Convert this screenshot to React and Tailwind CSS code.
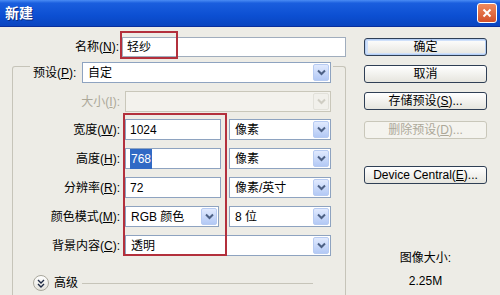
import React from "react";

const F = "font-['Liberation_Sans','Noto_Sans_CJK_SC',sans-serif]";

function Arrow({ disabled }) {
  return (
    <span
      className={`flex h-[17px] w-[16px] items-center justify-center rounded-[2px] border ${
        disabled
          ? "border-[#e2e1da] bg-[#f1f0eb]"
          : "border-[#b7cbf2] bg-gradient-to-b from-[#e1eafe] to-[#b3c9f5]"
      }`}
    >
      <svg width="9" height="7" viewBox="0 0 9 7">
        <path
          d="M1 1.5 L4.5 5 L8 1.5"
          fill="none"
          stroke={disabled ? "#cfcdc3" : "#4d6185"}
          strokeWidth="2"
        />
      </svg>
    </span>
  );
}

function Select({ w, text, disabled }) {
  return (
    <div
      className={`flex h-[21px] ${w} items-center justify-between border ${
        disabled ? "border-[#c9c7ba] bg-[#f3f2ed]" : "border-[#8ea3c0] bg-white"
      } pl-[5px] pr-[1px]`}
    >
      <span className="leading-none">{text}</span>
      <Arrow disabled={disabled} />
    </div>
  );
}

function Label({ t, k, gray }) {
  return (
    <span className={`whitespace-nowrap ${gray ? "text-[#aca899]" : "text-black"}`}>
      {t}(<u>{k}</u>):
    </span>
  );
}

function Row({ t, k, gray, children, mt }) {
  return (
    <div className={`flex h-[21px] items-center ${mt}`}>
      <div className="w-[107px] text-right">
        <Label t={t} k={k} gray={gray} />
      </div>
      <div className="ml-[5px] flex items-center gap-[8px]">{children}</div>
    </div>
  );
}

function Input({ w, children }) {
  return (
    <div className={`flex h-[21px] ${w} items-center border border-[#8ea3c0] bg-white pl-[4px]`}>
      {children}
    </div>
  );
}

function Btn({ children, mt, def, disabled }) {
  return (
    <div
      className={`flex h-[18px] w-[123px] items-center justify-center rounded-[3px] border ${mt} ${
        disabled
          ? "border-[#c9c7ba] bg-[#f4f3ee] text-[#aca899]"
          : "border-[#2f3f55] bg-gradient-to-b from-white to-[#e6e5de] text-black"
      } ${def ? "shadow-[inset_0_0_0_1px_#b5cff5,inset_1px_0_0_2px_#cfe0fa]" : ""}`}
    >
      {children}
    </div>
  );
}

export default function App() {
  return (
    <div
      className={`flex h-[295px] w-[500px] flex-col overflow-hidden bg-[#edece6] text-[12px] text-black ${F}`}
    >
      {/* Title bar */}
      <div className="flex h-[27px] items-center justify-between border-b border-[#0a2f9c] bg-[linear-gradient(to_bottom,#4a8cf4_0%,#1a5ede_12%,#0c4fd2_60%,#0a45c0_100%)] pl-[5px] pr-[3px]">
        <span className="text-[14px] font-bold text-white [text-shadow:1px_1px_0_#0a2a80]">
          新建
        </span>
        <div className="flex h-[20px] w-[20px] items-center justify-center rounded-[3px] border border-white bg-gradient-to-b from-[#ee8a5e] to-[#d2502a]">
          <svg width="10" height="10" viewBox="0 0 10 10">
            <path d="M1.5 1.5 L8.5 8.5 M8.5 1.5 L1.5 8.5" stroke="white" strokeWidth="2" />
          </svg>
        </div>
      </div>

      {/* Body */}
      <div className="relative flex flex-1">
        {/* Left column */}
        <div className="flex w-[346px] flex-col">
          {/* Name row */}
          <div className="mt-[10px] flex h-[20px] items-center">
            <div className="w-[120px] text-right">
              <Label t="名称" k="N" />
            </div>
            <div className="ml-[3px] flex h-[20px] w-[224px] shrink-0 items-center border border-[#a0adbd] bg-white pl-[4px]">
              轻纱
            </div>
          </div>

          {/* Group box */}
          <div className="ml-[12px] mt-[9px] flex w-[334px] flex-1 flex-col rounded-t-[3px] border-l border-r border-t border-[#c6c4b9]">
            {/* Preset row */}
            <div className="-mt-[5px] flex h-[21px] items-center">
              <div className="w-[17px]" />
              <div className="flex h-[21px] w-[303px] items-center justify-between bg-[#edece6] pl-[3px] pr-[2px]">
                <Label t="预设" k="P" />
                <Select w="w-[249px]" text="自定" />
              </div>
            </div>

            <Row t="大小" k="I" gray mt="mt-[8px]">
              <Select w="w-[206px]" text="" disabled />
            </Row>
            <Row t="宽度" k="W" mt="mt-[7px]">
              <Input w="w-[96px]">1024</Input>
              <Select w="w-[102px]" text="像素" />
            </Row>
            <Row t="高度" k="H" mt="mt-[8px]">
              <Input w="w-[96px]">
                <span className="bg-[#316ac5] px-[1px] py-[1px] text-white">768</span>
              </Input>
              <Select w="w-[102px]" text="像素" />
            </Row>
            <Row t="分辨率" k="R" mt="mt-[8px]">
              <Input w="w-[96px]">72</Input>
              <Select w="w-[102px]" text="像素/英寸" />
            </Row>
            <Row t="颜色模式" k="M" mt="mt-[8px]">
              <Select w="w-[94px]" text="RGB 颜色" />
              <div className="ml-[2px]">
                <Select w="w-[102px]" text="8 位" />
              </div>
            </Row>
            <Row t="背景内容" k="C" mt="mt-[8px]">
              <Select w="w-[206px]" text="透明" />
            </Row>

            {/* Advanced */}
            <div className="mt-[19px] flex h-[16px] items-center">
              <div className="ml-[20px] flex h-[16px] w-[16px] items-center justify-center rounded-full border border-[#a9a79c] bg-gradient-to-b from-white to-[#e4e3dc]">
                <svg width="8" height="9" viewBox="0 0 8 9">
                  <path d="M1 1 L4 4 L7 1 M1 5 L4 8 L7 5" fill="none" stroke="#1f2a44" strokeWidth="1.4" />
                </svg>
              </div>
              <span className="ml-[5px]">高级</span>
              <div className="ml-[4px] mr-[32px] h-px flex-1 bg-[#c6c4b9]" />
            </div>
          </div>
        </div>

        {/* Right column */}
        <div className="flex flex-1 flex-col pl-[18px]">
          <Btn mt="mt-[11px]" def>确定</Btn>
          <Btn mt="mt-[9px]">取消</Btn>
          <Btn mt="mt-[9px]">
            存储预设(<u>S</u>)...
          </Btn>
          <Btn mt="mt-[11px]" disabled>
            删除预设(<u>D</u>)...
          </Btn>
          <Btn mt="mt-[27px]">
            Device Central(<u>E</u>)...
          </Btn>
          <div className="mt-[66px] w-[123px] text-center leading-[16px]">图像大小:</div>
          <div className="mt-[7px] w-[123px] text-center leading-[16px]">2.25M</div>
        </div>

        {/* Red annotation boxes */}
        <div className="pointer-events-none absolute left-[120px] top-[4px] h-[28px] w-[58px] border-2 border-[#b3303c]" />
        <div className="pointer-events-none absolute left-[123px] top-[86px] h-[143px] w-[104px] border-2 border-[#b3303c]" />
      </div>
    </div>
  );
}
